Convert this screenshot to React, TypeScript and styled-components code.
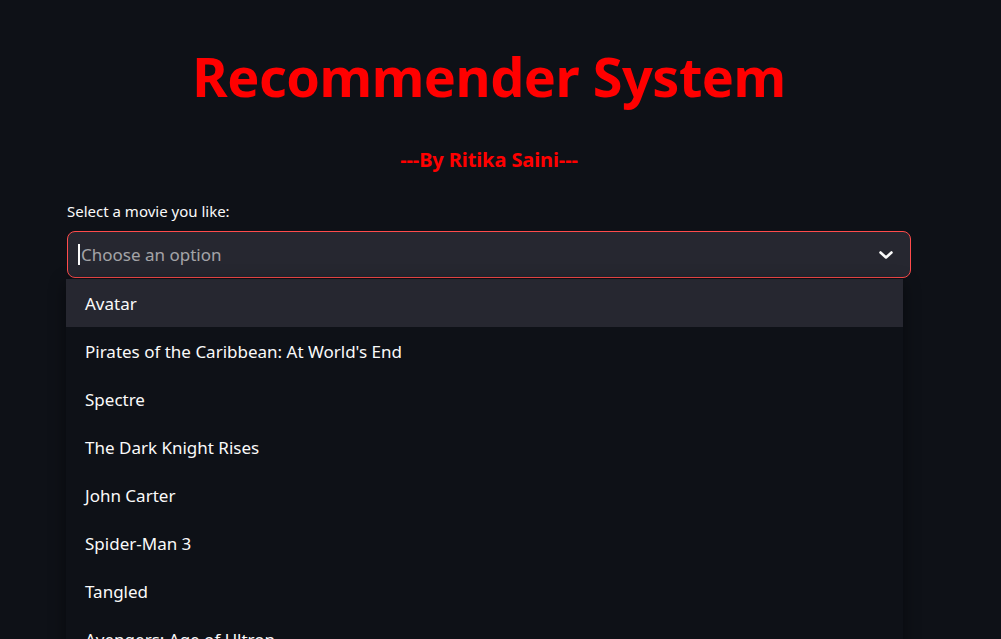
import React from "react";
import styled, { createGlobalStyle } from "styled-components";

const Global = createGlobalStyle`
  html, body { margin: 0; padding: 0; background: #0e1117; overflow: hidden; }
  body { font-family: "Noto Sans", "Open Sans", sans-serif; color: #fafafa; }
`;

const Page = styled.div`
  width: 1001px;
  height: 639px;
  overflow: hidden;
  background: #0e1117;
  padding: 0 90px 0 67px;
  box-sizing: border-box;
  display: flex;
  flex-direction: column;
`;

const Title = styled.h1`
  margin: 43px 0 0;
  text-align: center;
  color: #ff0000;
  font-family: "Noto Sans", sans-serif;
  font-weight: 700;
  font-size: 54px;
  line-height: 66px;
  letter-spacing: -0.5px;
`;

const Subtitle = styled.h3`
  margin: 38px 0 0;
  text-align: center;
  color: #ff0000;
  font-family: "Noto Sans", sans-serif;
  font-weight: 700;
  font-size: 20px;
  line-height: 26px;
  letter-spacing: -0.1px;
`;

const Label = styled.label`
  margin-top: 28px;
  font-size: 15px;
  line-height: 20px;
  color: #fafafa;
`;

const SelectBox = styled.div`
  margin-top: 10px;
  height: 47px;
  flex-shrink: 0;
  box-sizing: border-box;
  border: 1px solid #ff4b4b;
  border-radius: 8px;
  background: #262730;
  display: flex;
  align-items: center;
  padding: 0 12px 0 10px;
`;

const Caret = styled.span`
  width: 2px;
  height: 21px;
  background: #fafafa;
  margin-right: 1px;
`;

const Placeholder = styled.span`
  flex: 1;
  font-size: 17px;
  color: rgba(250, 250, 250, 0.6);
`;

const Chevron = styled.svg`
  width: 24px;
  height: 24px;
`;

const Menu = styled.ul`
  list-style: none;
  margin: 1px 8px 0 -1px;
  padding: 0;
  background: #0e1117;
  box-shadow: 0 4px 16px rgba(0, 0, 0, 0.45);
`;

const Item = styled.li<{ $active?: boolean }>`
  height: 48px;
  flex-shrink: 0;
  display: flex;
  align-items: center;
  padding-left: 19px;
  font-size: 17px;
  color: #fafafa;
  background: ${(p) => (p.$active ? "#262730" : "transparent")};
`;

const movies = [
  "Avatar",
  "Pirates of the Caribbean: At World's End",
  "Spectre",
  "The Dark Knight Rises",
  "John Carter",
  "Spider-Man 3",
  "Tangled",
  "Avengers: Age of Ultron",
];

export default function App() {
  return (
    <>
      <Global />
      <Page>
        <Title>Recommender System</Title>
        <Subtitle>---By Ritika Saini---</Subtitle>
        <Label>Select a movie you like:</Label>
        <SelectBox>
          <Caret />
          <Placeholder>Choose an option</Placeholder>
          <Chevron viewBox="0 0 24 24" fill="none" stroke="#fafafa" strokeWidth="2.6" strokeLinecap="round" strokeLinejoin="round">
            <polyline points="6.5 9.5 12 14.5 17.5 9.5" />
          </Chevron>
        </SelectBox>
        <Menu>
          {movies.map((m, i) => (
            <Item key={m} $active={i === 0}>{m}</Item>
          ))}
        </Menu>
      </Page>
    </>
  );
}
